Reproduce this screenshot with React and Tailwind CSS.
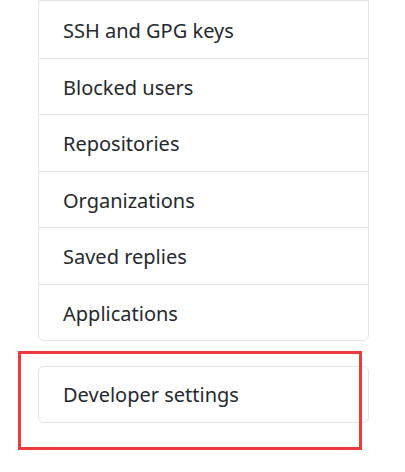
import React from "react";

const items = [
  "SSH and GPG keys",
  "Blocked users",
  "Repositories",
  "Organizations",
  "Saved replies",
  "Applications",
];

const MenuItem = ({ label, first }) => (
  <div
    className={`flex h-[56.5px] items-center pl-6 pt-[3px] ${
      first ? "" : "border-t border-[#e1e4e8]"
    }`}
  >
    {label}
  </div>
);

export default function App() {
  return (
    <div
      className="relative h-[472px] w-[405px] overflow-hidden bg-white text-[20px] text-[#24292e]"
      style={{ fontFamily: '"Noto Sans", "Open Sans", sans-serif' }}
    >
      <div className="ml-[38px] w-[331px]">
        {/* settings menu, scrolled so the first visible row sits at the top */}
        <div className="rounded-b-md border border-t border-[#e1e4e8]">
          {items.map((label, idx) => (
            <MenuItem key={label} label={label} first={idx === 0} />
          ))}
        </div>

        <div className="mt-[25px] flex h-[57px] items-center rounded-md border border-[#e1e4e8] pl-6">
          Developer settings
        </div>
      </div>

      {/* annotation box */}
      <div className="absolute left-[18px] top-[351px] h-[99px] w-[344px] border-[3px] border-[#ef3b3b]" />
    </div>
  );
}
